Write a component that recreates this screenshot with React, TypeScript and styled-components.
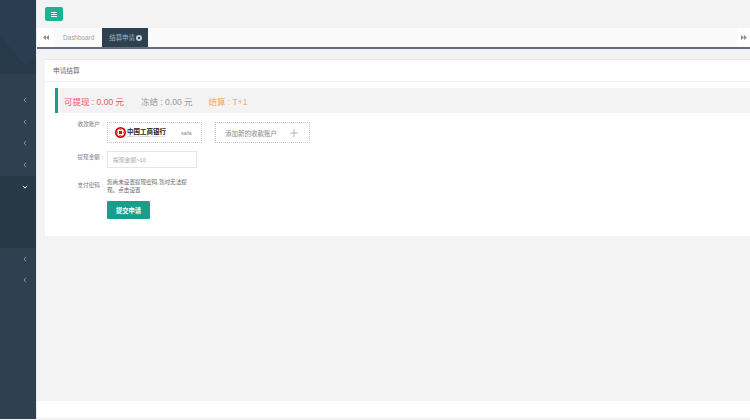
import styled, { createGlobalStyle } from 'styled-components'

const GlobalStyle = createGlobalStyle`
  html, body { margin: 0; padding: 0; height: 100%; overflow: hidden; }
  body { font-family: "Liberation Sans", "Noto Sans CJK SC", sans-serif; background: #f3f3f4; }
  * { box-sizing: border-box; }
`

const Shell = styled.div`
  display: flex;
  width: 750px;
  height: 419px;
  overflow: hidden;
`

const Sidebar = styled.aside`
  width: 36px;
  flex: none;
  background: #2f4050;
  display: flex;
  flex-direction: column;
`

const Brand = styled.div`
  height: 74px;
  flex: none;
  background: #293e50;
  svg { display: block; }
`

const Menu = styled.nav`
  padding-top: 15px;
  display: flex;
  flex-direction: column;
`

const MenuItem = styled.div<{ $open?: boolean }>`
  height: ${(p) => (p.$open ? '72px' : '21.7px')};
  padding-top: ${(p) => (p.$open ? '9px' : '0')};
  background: ${(p) => (p.$open ? '#293846' : 'transparent')};
  color: ${(p) => (p.$open ? '#fff' : '#8095a8')};
  display: flex;
  align-items: ${(p) => (p.$open ? 'flex-start' : 'center')};
  justify-content: flex-end;
  padding-right: ${(p) => (p.$open ? '8px' : '9px')};
  svg { display: block; }
`

const Main = styled.main`
  flex: 1;
  min-width: 0;
  display: flex;
  flex-direction: column;
  background: #f3f3f4;
  border-left: 1px solid #e7eaec;
`

const TopBar = styled.div`
  height: 28px;
  flex: none;
  padding: 7px 0 0 8px;
`

const MenuButton = styled.button`
  width: 18px;
  height: 14px;
  padding: 0;
  border: 0;
  border-radius: 2px;
  background: #1ab394;
  color: #fff;
  display: flex;
  align-items: center;
  justify-content: center;
`

const TabBar = styled.div`
  height: 21px;
  flex: none;
  display: flex;
  background: #fafafa;
  border-bottom: 2px solid #5f6f81;
`

const TabArrow = styled.div<{ $width: number }>`
  width: ${(p) => p.$width}px;
  flex: none;
  background: #fff;
  color: #8a8f96;
  display: flex;
  align-items: center;
  justify-content: center;
`

const Tabs = styled.div`
  flex: 1;
  display: flex;
  padding-left: 1px;
`

const Tab = styled.div<{ $active?: boolean }>`
  padding: ${(p) => (p.$active ? '0 6px 0 7px' : '0 7px 0 8px')};
  margin-left: ${(p) => (p.$active ? '1px' : '0')};
  background: ${(p) => (p.$active ? '#2f4050' : 'transparent')};
  color: ${(p) => (p.$active ? '#a7b1c2' : '#a2a5a7')};
  font-size: 6.4px;
  display: flex;
  align-items: center;
  gap: 1.500px;
  white-space: nowrap;
`

const TabClose = styled.span`
  width: 6px;
  height: 6px;
  border-radius: 50%;
  background: #c9d0d8;
  display: flex;
  align-items: center;
  justify-content: center;
  &::after {
    content: '';
    width: 2px;
    height: 2px;
    background: #2f4050;
  }
`

const Content = styled.div`
  flex: 1;
  padding: 10px 0 0 8px;
`

const Card = styled.section`
  background: #fff;
  border-top: 1px solid #e7eaec;
  height: 177px;
`

const CardTitle = styled.h5`
  margin: 0;
  height: 22px;
  padding-left: 8px;
  font-size: 6.700px;
  font-weight: 400;
  line-height: 21px;
  color: #676a6c;
  border-bottom: 1px solid #f0f0f0;
`

const CardBody = styled.div`
  padding: 6px 0 0 10px;
`

const Balance = styled.div`
  height: 25px;
  background: #f3f3f3;
  border-left: 3px solid #16a085;
  padding-left: 6px;
  display: flex;
  align-items: center;
  font-size: 8.500px;
  color: #9a9a9a;
`

const Amount = styled.span<{ $tone: string; $gap: number }>`
  color: ${(p) => p.$tone};
  margin-right: ${(p) => p.$gap}px;
  white-space: pre;
`

const Form = styled.div`
  padding: 9px 0 0 0;
  display: flex;
  flex-direction: column;
`

const Row = styled.div<{ $mb: number }>`
  display: flex;
  align-items: flex-start;
  margin-bottom: ${(p) => p.$mb}px;
`

const Label = styled.label<{ $top: number }>`
  width: 52px;
  flex: none;
  text-align: right;
  font-size: 5.600px;
  line-height: 5px;
  color: #777;
  padding: ${(p) => p.$top}px 4px 0 0;
  white-space: pre;
`

const Dashed = styled.div`
  height: 21px;
  width: 95px;
  border: 1px dotted #c4c4c4;
  display: flex;
  align-items: center;
  color: #888;
`

const AccountBox = styled(Dashed)`
  padding-left: 7px;
  margin-right: 13px;
  font-size: 5.600px;
`

const AddBox = styled(Dashed)`
  padding: 0 11px 0 9px;
  justify-content: space-between;
  font-size: 6.500px;
  white-space: nowrap;
`

const BankLogo = styled.div`
  display: flex;
  align-items: center;
  gap: 1px;
  width: 66px;
  svg { display: block; flex: none; }
`

const BankNames = styled.div`
  display: flex;
  flex-direction: column;
  align-items: flex-start;
`

const BankName = styled.span`
  font-size: 6.500px;
  line-height: 7px;
  font-weight: 700;
  color: #222;
  white-space: nowrap;
`

const BankEnglish = styled.span`
  font-size: 1.700px;
  line-height: 2px;
  color: #999;
  white-space: nowrap;
`

const AmountInput = styled.input`
  width: 90px;
  height: 17px;
  border: 1px solid #e5e6e7;
  padding: 0 5px;
  font-family: inherit;
  font-size: 5.800px;
  outline: 0;
  &::placeholder { color: #aaa; }
`

const Hint = styled.div`
  width: 84px;
  font-size: 5.600px;
  line-height: 8px;
  color: #666;
`

const Submit = styled.button`
  margin-left: 52px;
  width: 43px;
  height: 18px;
  padding: 0;
  border: 0;
  border-radius: 1px;
  background: #1a9e8c;
  color: #fff;
  font-family: inherit;
  font-size: 6.300px;
  font-weight: 700;
`

const Footer = styled.footer`
  height: 17px;
  flex: none;
  background: #fff;
  margin-bottom: 1px;
`

const ChevronLeft = () => (
  <svg width="4" height="6" viewBox="0 0 4 6">
    <path d="M3 .8 1 3l2 2.200" fill="none" stroke="currentColor" strokeWidth="1" />
  </svg>
)

const ChevronDown = () => (
  <svg width="6" height="4" viewBox="0 0 6 4">
    <path d="M.8 1 3 3 5.200 1" fill="none" stroke="currentColor" strokeWidth="1" />
  </svg>
)

const Backward = ({ flip }: { flip?: boolean }) => (
  <svg width="6" height="5" viewBox="0 0 6 5" style={flip ? { transform: 'scaleX(-1)' } : undefined}>
    <path d="M3 0v5L0 2.500zM6 0v5L3 2.500z" fill="currentColor" />
  </svg>
)

function App() {
  return (
    <>
      <GlobalStyle />
      <Shell>
        <Sidebar>
          <Brand>
            <svg width="36" height="74" viewBox="0 0 36 74">
              <path d="M0 36 26 66 36 56V74H0z" fill="#263a4b" />
            </svg>
          </Brand>
          <Menu>
            {[0, 1, 2, 3].map((i) => (
              <MenuItem key={i}>
                <ChevronLeft />
              </MenuItem>
            ))}
            <MenuItem $open>
              <ChevronDown />
            </MenuItem>
            <MenuItem>
              <ChevronLeft />
            </MenuItem>
            <MenuItem>
              <ChevronLeft />
            </MenuItem>
          </Menu>
        </Sidebar>
        <Main>
          <TopBar>
            <MenuButton aria-label="menu">
              <svg width="6" height="5" viewBox="0 0 6 5">
                <path d="M0 .5h6M0 2.500h6M0 4.500h6" stroke="#fff" strokeWidth="1" />
              </svg>
            </MenuButton>
          </TopBar>
          <TabBar>
            <TabArrow $width={17}>
              <Backward />
            </TabArrow>
            <Tabs>
              <Tab>Dashboard</Tab>
              <Tab $active>
                结算申请
                <TabClose />
              </Tab>
            </Tabs>
            <TabArrow $width={13}>
              <Backward flip />
            </TabArrow>
          </TabBar>
          <Content>
            <Card>
              <CardTitle>申请结算</CardTitle>
              <CardBody>
                <Balance>
                  <Amount $tone="#ed5565" $gap={17}>可提现 : 0.00 元</Amount>
                  <Amount $tone="#999" $gap={16}>冻结 : 0.00 元</Amount>
                  <Amount $tone="#f8ac59" $gap={0}>结算 : T+1</Amount>
                </Balance>
                <Form>
                  <Row $mb={8}>
                    <Label $top={0}>收款账户 :</Label>
                    <AccountBox>
                      <BankLogo>
                        <svg width="11" height="11" viewBox="0 0 22 22">
                          <circle cx="11" cy="11" r="11" fill="#d7000f" />
                          <circle cx="11" cy="11" r="7" fill="none" stroke="#fff" strokeWidth="1.500" />
                          <rect x="7" y="7" width="8" height="8" fill="none" stroke="#fff" strokeWidth="2" />
                        </svg>
                        <BankNames>
                          <BankName>中国工商银行</BankName>
                          <BankEnglish>INDUSTRIAL AND COMMERCIAL BANK OF CHINA</BankEnglish>
                        </BankNames>
                      </BankLogo>
                      safa
                    </AccountBox>
                    <AddBox>
                      添加新的收款账户
                      <svg width="8" height="8" viewBox="0 0 8 8">
                        <path d="M4 0v8M0 4h8" stroke="#999" strokeWidth=".7" />
                      </svg>
                    </AddBox>
                  </Row>
                  <Row $mb={10}>
                    <Label $top={4}>提现金额 :</Label>
                    <AmountInput placeholder="提现金额>10" />
                  </Row>
                  <Row $mb={7}>
                    <Label $top={5}>支付密码 :</Label>
                    <Hint>您尚未设置提现密码,暂时无法提现。点击设置</Hint>
                  </Row>
                  <Submit>提交申请</Submit>
                </Form>
              </CardBody>
            </Card>
          </Content>
          <Footer />
        </Main>
      </Shell>
    </>
  )
}

export default App
